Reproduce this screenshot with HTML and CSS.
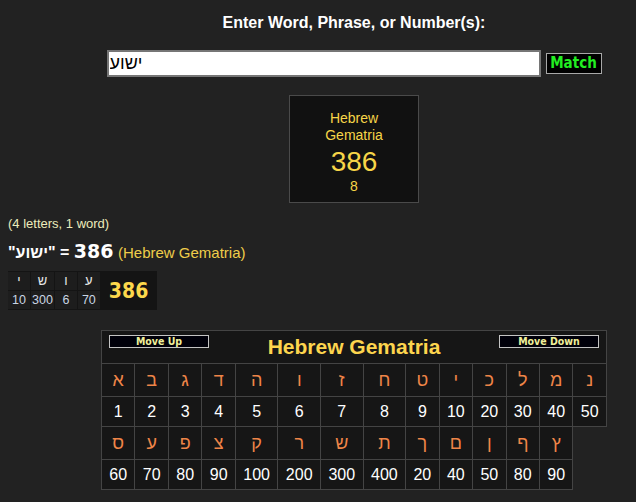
FILE: index.html
```html
<!DOCTYPE html>
<html>
<head>
<meta charset="utf-8">
<title>Gematria</title>
<link rel="stylesheet" href="styles.css">
</head>
<body>
<div class="page">
  <div class="prompt">Enter Word, Phrase, or Number(s):</div>
  <form class="search">
    <input class="query" type="text" value="ישוע">
    <button class="match" type="button">Match</button>
  </form>
  <div class="result-box">
    <div class="rb-name">Hebrew<br>Gematria</div>
    <div class="rb-value">386</div>
    <div class="rb-reduced">8</div>
  </div>
  <div class="count">(4 letters, 1 word)</div>
  <div class="equation"><span class="eq-word">"<bdi>ישוע</bdi>" =</span> <span class="eq-num">386</span> <span class="eq-cipher">(Hebrew Gematria)</span></div>
  <table class="breakdown">
    <tr>
      <td class="bd-letter">י</td><td class="bd-letter">ש</td><td class="bd-letter">ו</td><td class="bd-letter">ע</td>
      <td class="bd-total" rowspan="2">386</td>
    </tr>
    <tr>
      <td class="bd-num">10</td><td class="bd-num">300</td><td class="bd-num">6</td><td class="bd-num">70</td>
    </tr>
  </table>
  <table class="cipher">
    <tr>
      <td class="cipher-head" colspan="14">
        <div class="head-bar">
          <button class="move" type="button">Move Up</button>
          <span class="cipher-title">Hebrew Gematria</span>
          <button class="move" type="button">Move Down</button>
        </div>
      </td>
    </tr>
    <tr class="letters">
      <td>א</td><td>ב</td><td>ג</td><td>ד</td><td>ה</td><td>ו</td><td>ז</td><td>ח</td><td>ט</td><td>י</td><td>כ</td><td>ל</td><td>מ</td><td>נ</td>
    </tr>
    <tr class="values">
      <td>1</td><td>2</td><td>3</td><td>4</td><td>5</td><td>6</td><td>7</td><td>8</td><td>9</td><td>10</td><td>20</td><td>30</td><td>40</td><td>50</td>
    </tr>
    <tr class="letters">
      <td>ס</td><td>ע</td><td>פ</td><td>צ</td><td>ק</td><td>ר</td><td>ש</td><td>ת</td><td>ך</td><td>ם</td><td>ן</td><td>ף</td><td>ץ</td>
    </tr>
    <tr class="values">
      <td>60</td><td>70</td><td>80</td><td>90</td><td>100</td><td>200</td><td>300</td><td>400</td><td>20</td><td>40</td><td>50</td><td>80</td><td>90</td>
    </tr>
  </table>
</div>
</body>
</html>
```

FILE: styles.css
```css
html {
  overflow: hidden;
}
body {
  margin: 8px;
  background: #222222;
  color: #ffffff;
  font-family: "Liberation Sans", Arial, sans-serif;
}
.page {
  width: 692px;
}
.prompt {
  padding-top: 6px;
  font-size: 16px;
  line-height: 18px;
  font-weight: bold;
  text-align: center;
}
.search {
  margin: 18px 0 0;
  display: flex;
  justify-content: center;
  align-items: center;
  gap: 5px;
}
.query {
  box-sizing: border-box;
  width: 434px;
  height: 27px;
  margin: 0;
  padding: 0 1px;
  border: 2px solid #767676;
  background: #ffffff;
  color: #000000;
  font-family: "Liberation Sans", Arial, sans-serif;
  font-size: 18px;
}
.match {
  box-sizing: border-box;
  width: 56px;
  height: 21px;
  margin: 0;
  padding: 0;
  border: 1px solid #a8a8a8;
  background: #000000;
  color: #22ee22;
  font-family: "DejaVu Sans Condensed", "DejaVu Sans", sans-serif;
  font-stretch: condensed;
  font-weight: bold;
  font-size: 15px;
  line-height: 19px;
}
.result-box {
  box-sizing: border-box;
  width: 130px;
  height: 108px;
  margin: 18px auto 0;
  padding-top: 14px;
  border: 1px solid #4a4a4a;
  background: #111111;
  color: #f7d548;
  text-align: center;
}
.rb-name {
  font-size: 14px;
  line-height: 17px;
}
.rb-value {
  margin-top: 2px;
  font-size: 28px;
  line-height: 32px;
}
.rb-reduced {
  font-size: 14px;
  line-height: 16px;
}
.count {
  margin-top: 13px;
  font-size: 13px;
  line-height: 15px;
  color: #ececbc;
}
.equation {
  margin-top: 8px;
  line-height: 24px;
  white-space: nowrap;
}
.eq-word {
  font-weight: bold;
  font-size: 16px;
}
.eq-num {
  font-family: "DejaVu Sans", sans-serif;
  font-weight: bold;
  font-size: 19px;
}
.eq-cipher {
  font-size: 15px;
  color: #efcd4a;
}
.breakdown {
  margin: 6px 0 0 -1px;
  border-spacing: 1px;
  background: #141414;
}
.bd-letter,
.bd-num {
  box-sizing: border-box;
  width: 22px;
  height: 18px;
  padding: 0 1px;
  background: #1d1d1d;
  text-align: center;
}
.bd-letter {
  font-size: 13px;
  color: #e8e8e8;
  line-height: 18px;
}
.bd-num {
  font-size: 12.5px;
  color: #c9d5e3;
  line-height: 18px;
}
.bd-total {
  padding: 0 8px;
  font-family: "DejaVu Sans Condensed", "DejaVu Sans", sans-serif;
  font-stretch: condensed;
  font-weight: bold;
  font-size: 21px;
  color: #fcd84c;
  text-align: center;
}
.cipher {
  width: 506px;
  margin: 20px auto 0;
  border-collapse: collapse;
}
.cipher td {
  border: 1px solid #444444;
  background: #161616;
  text-align: center;
  padding: 5px 7px;
}
.cipher .cipher-head {
  padding: 4px 7px 4px 7px;
}
.head-bar {
  display: flex;
  justify-content: space-between;
  align-items: flex-start;
}
.move {
  box-sizing: border-box;
  width: 100px;
  height: 13px;
  margin: 0;
  padding: 0;
  border: 1px solid #c4c4c4;
  background: #00000a;
  color: #f0f09a;
  font-family: "DejaVu Sans Condensed", "DejaVu Sans", sans-serif;
  font-stretch: condensed;
  font-weight: bold;
  font-size: 10.5px;
  line-height: 11px;
}
.cipher-title {
  font-size: 21px;
  line-height: 24px;
  font-weight: bold;
  color: #fdd54e;
}
.letters td {
  font-size: 18px;
  line-height: 22px;
  color: #ef8548;
}
.values td {
  font-size: 16px;
  line-height: 19px;
  color: #ffffff;
}
```
